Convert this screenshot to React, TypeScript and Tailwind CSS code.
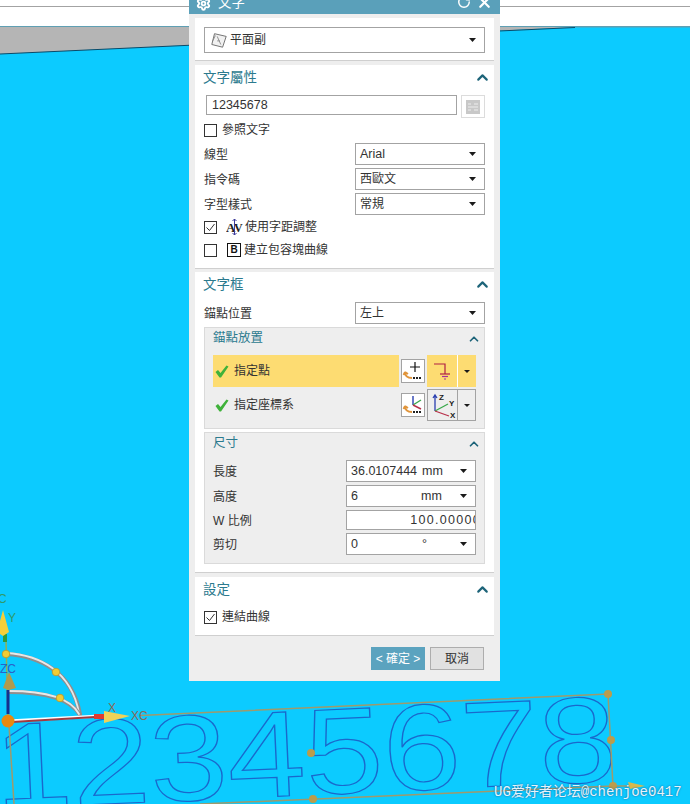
import React from 'react';
import { ChevronUp, RotateCw, Settings, X } from 'lucide-react';

const cjk = 'font-["Liberation_Sans","Noto_Sans_CJK_TC",sans-serif]';

const Caret: React.FC<{ small?: boolean }> = ({ small }) => (
  <svg width={small ? 6 : 7} height={small ? 3 : 4} viewBox="0 0 10 5" preserveAspectRatio="none" className="shrink-0">
    <path d="M0 0H10L5 5Z" fill="#1a1a1a" />
  </svg>
);

const Select: React.FC<{ className?: string; children: React.ReactNode }> = ({ className = '', children }) => (
  <div className={`flex items-center h-[22px] bg-white border border-[#a3a3a3] pl-[4px] pr-[8px] justify-between text-[12.5px] text-[#333] ${className}`}>
    {children}
    <Caret />
  </div>
);

const Check: React.FC<{ on?: boolean }> = ({ on }) => (
  <span className="flex items-center justify-center w-[13px] h-[13px] bg-white border border-[#333] shrink-0">
    {on && (
      <svg width="11" height="11" viewBox="0 0 11 11">
        <path d="M1.5 5.5L4.5 8.5L9.5 2" fill="none" stroke="#333" strokeWidth="1" />
      </svg>
    )}
  </span>
);

const PanelHeader: React.FC<{ title: string }> = ({ title }) => (
  <div className="flex items-center justify-between h-[24px] pl-[8px] pr-[3px]">
    <span className="pt-[2px] text-[13.5px] text-[#2b7a8e]">{title}</span>
    <ChevronUp size={17} strokeWidth={3} className="text-[#1d6479]" />
  </div>
);

const GroupHeader: React.FC<{ title: string }> = ({ title }) => (
  <div className="flex items-center justify-between h-[21px] pl-[8px] pr-[3px]">
    <span className="text-[12.5px] text-[#2b7a8e]">{title}</span>
    <ChevronUp size={14} strokeWidth={3} className="text-[#1d6479]" />
  </div>
);

const Tick = () => (
  <svg width="14" height="13" viewBox="0 0 14 13" className="shrink-0">
    <path d="M0.5 7L3 5L5.5 8L11.5 0.5L13.5 1.5L6 12.5H4.5Z" fill="#3fb23a" />
  </svg>
);

const Dots = () => <path d="M11 17h2v2h-2zM14 17h2v2h-2zM17 17h2v2h-2z" fill="#222" />;

const OrangeArrow = () => (
  <path d="M3 12C3 16 6 18 10 18M3 12L1.5 15M3 12L6 14" fill="none" stroke="#e0943a" strokeWidth="1.8" />
);

const PointButton = () => (
  <div className="flex items-center justify-center w-[24px] h-[24px] bg-white border border-[#a3a3a3] shrink-0">
    <svg width="22" height="22" viewBox="0 0 22 22">
      <path d="M13 2V12M8 7H18" stroke="#111" strokeWidth="1.2" />
      <OrangeArrow />
      <Dots />
    </svg>
  </div>
);

const CsysButton = () => (
  <div className="flex items-center justify-center w-[24px] h-[24px] bg-white border border-[#a3a3a3] shrink-0">
    <svg width="22" height="22" viewBox="0 0 22 22">
      <path d="M11 11V2" stroke="#2a3fb0" strokeWidth="1.4" />
      <path d="M11 11L19 6" stroke="#3aa84a" strokeWidth="1.4" />
      <path d="M11 11L19 15" stroke="#b8304a" strokeWidth="1.4" />
      <OrangeArrow />
      <Dots />
    </svg>
  </div>
);

const Row: React.FC<{ label: string; children: React.ReactNode }> = ({ label, children }) => (
  <div className="flex items-center justify-between">
    <span className="pt-[2px] text-[12px] text-[#333]">{label}</span>
    {children}
  </div>
);

// the CAD view behind the dialog
const Viewport = () => (
  <svg width="690" height="804" viewBox="0 0 690 804" className="absolute inset-0">
    <rect width="690" height="804" fill="#0ccbff" />
    <rect width="690" height="26" fill="#ffffff" />
    <rect y="6" width="690" height="1" fill="#a3a3a3" />
    <rect y="26" width="690" height="1.5" fill="#5f9fb3" />
    <path d="M0 27H575L0 54Z" fill="#b5b5b5" />
    <path d="M0 54L575 27.5" stroke="#0b4a68" strokeWidth="1" />

    <text
      transform="translate(-4 809) rotate(-2.6) scale(1 0.87)"
      fontFamily="Liberation Sans"
      fontSize="140"
      fill="none"
      stroke="#1a68cc"
      strokeWidth="1.4"
    >
      12345678
    </text>

    <g fill="none" stroke="#9f9a6c" strokeWidth="1.5">
      <path d="M140 715.5L608 694L613 786L200 804" />
      <path d="M613 786H630" />
      <path d="M9 725L14 804" />
      <path d="M6 640L8 720" stroke="#8fb05a" />
    </g>

    <g fill="none" strokeLinecap="round">
      <path d="M6 654C40 656 72 672 80 714" stroke="#8e8e8e" strokeWidth="4" />
      <path d="M6 653C40 655 71 671 79 713" stroke="#e8e8e8" strokeWidth="1.8" />
      <path d="M9 692C44 692 70 698 80 715" stroke="#8e8e8e" strokeWidth="4" />
      <path d="M9 691C44 691 70 697 79 714" stroke="#e8e8e8" strokeWidth="1.8" />
    </g>

    <path d="M8 690V714" stroke="#14308f" strokeWidth="3" />
    <path d="M9 672L16 688L9 690L3 688Z" fill="#b09a4e" />
    <path d="M3 642V634H7V642Z" fill="#2f9a3c" />
    <path d="M3 610L9 632L3 636L-3 632Z" fill="#f4cf3a" />

    <path d="M8 721L100 716" stroke="#ffffff" strokeWidth="3" />
    <path d="M12 722L95 717" stroke="#a33a3f" strokeWidth="2" />
    <rect x="94" y="714" width="11" height="5" fill="#e03a30" />
    <path d="M104 711L130 716L104 723Z" fill="#f0d258" />
    <circle cx="8" cy="721" r="6.5" fill="#e8890f" />

    <g fill="#f0cc35" stroke="#b9962a" strokeWidth="0.8">
      <circle cx="6" cy="654" r="3.8" />
      <circle cx="56" cy="672" r="3.8" />
      <circle cx="60" cy="698" r="3.8" />
    </g>
    <g fill="#bb9c4c">
      <circle cx="608" cy="694" r="4" />
      <circle cx="611" cy="740" r="4" />
      <circle cx="613" cy="786" r="4" />
      <circle cx="311" cy="753" r="4" />
      <circle cx="313" cy="799" r="4" />
    </g>
    <path d="M628 782L645 786L630 789Z" fill="#d9b94d" />

    <g fontFamily="Liberation Sans" fontSize="12">
      <text x="-2" y="603" fill="#2f9a6a">C</text>
      <text x="8" y="622" fill="#2f9a6a">Y</text>
      <text x="0" y="673" fill="#2a62c8">ZC</text>
      <text x="108" y="712" fill="#8a6a5a">X</text>
      <text x="131" y="720" fill="#8a6a5a">XC</text>
    </g>
  </svg>
);

const App: React.FC = () => {
  return (
    <div className={`relative w-[690px] h-[804px] overflow-hidden ${cjk}`}>
      <Viewport />

      <span className='absolute left-[494px] top-[783px] whitespace-nowrap text-[14px] leading-[18px] text-[#e6f4fb] font-["Liberation_Mono","Noto_Sans_CJK_SC",monospace] [text-shadow:0_0_2px_#14508a]'>
        UG爱好者论坛@chenjoe0417
      </span>

      {/* dialog */}
      <div className="absolute left-[189px] top-0 w-[311px] h-[681px] flex flex-col bg-[#eeeeee]">
        <div className="relative flex items-end justify-between h-[14px] shrink-0 overflow-hidden bg-[#5aa0ba] px-[6px] text-white">
          <div className="flex items-center gap-[7px] h-[20px] shrink-0 mb-[1px] ml-[1px]">
            <Settings size={15} strokeWidth={3} />
            <span className="text-[13.5px]">文字</span>
          </div>
          <div className="flex items-center gap-[5px] h-[20px] shrink-0 mb-[2px] mr-[1px]">
            <RotateCw size={14} strokeWidth={2.5} />
            <X size={17} strokeWidth={3} />
          </div>
        </div>

        <div className="flex flex-col mt-[4px] mx-[6px]">
          {/* type */}
          <div className="bg-white border-b border-[#cfcfcf] h-[43px] pt-[9px] px-[9px]">
            <Select className="h-[26px] pl-[5px]">
              <span className="flex items-center text-[12px]">
                <svg width="18" height="18" viewBox="0 0 20 20" className="mr-[2px]">
                  <path d="M5 3L18 6L14 18L2 15Z" fill="#f1f1f1" stroke="#666" />
                  <path d="M3 11L6 5M8 6L12 15M8 11H11" stroke="#888" fill="none" />
                </svg>
                平面副
              </span>
            </Select>
          </div>

          {/* text attributes */}
          <div className="bg-white border-b border-[#cfcfcf] h-[204px] mt-[4px]">
            <PanelHeader title="文字屬性" />
            <div className="px-[9px] mt-[6px] flex flex-col">
              <div className="flex items-start justify-between h-[23px] pl-[2px]">
                <div className="flex items-center w-[251px] h-[20px] bg-white border border-[#a3a3a3] pl-[5px] pt-[1px] text-[12.5px] text-[#333]">
                  12345678
                </div>
                <div className="flex items-center justify-center w-[24px] h-[23px] bg-white border border-[#dcdcdc]">
                  <svg width="14" height="14" viewBox="0 0 14 14">
                    <rect width="14" height="14" fill="#c8c8c8" />
                    <path d="M2 4H5M8 4H12M2 7H12M2 10H5M8 10H12" stroke="#eeeeee" />
                  </svg>
                </div>
              </div>
              <div className="flex items-center gap-[5px] h-[20px] mt-[2px] text-[12px] text-[#333]">
                <Check />
                參照文字
              </div>
              <div className="flex flex-col gap-[3px] mt-[3px]">
                <Row label="線型">
                  <Select className="w-[130px]">Arial</Select>
                </Row>
                <Row label="指令碼">
                  <Select className="w-[130px]">
                    <span className="text-[12px]">西歐文</span>
                  </Select>
                </Row>
                <Row label="字型樣式">
                  <Select className="w-[130px]">
                    <span className="text-[12px]">常規</span>
                  </Select>
                </Row>
              </div>
              <div className="flex items-center h-[20px] mt-[2px] text-[12px] text-[#333]">
                <Check on />
                <svg width="17" height="18" viewBox="0 0 17 18" className="ml-[9px] mr-[2px]">
                  <text x="0" y="14" fontFamily="Liberation Serif" fontSize="13" fontWeight="700" fill="#222">A</text>
                  <text x="8" y="14" fontFamily="Liberation Serif" fontSize="12" fontWeight="700" fill="#222">V</text>
                  <path d="M8.5 1V17M6.5 3L8.5 1L10.5 3M6.5 15L8.5 17L10.5 15" fill="none" stroke="#3c3a9a" />
                </svg>
                使用字距調整
              </div>
              <div className="flex items-center h-[20px] mt-[3px] text-[12px] text-[#333]">
                <Check />
                <span className="flex items-center justify-center w-[14px] h-[14px] ml-[10px] mr-[3px] border border-[#111] text-[10px] font-bold leading-none text-[#111]">
                  B
                </span>
                建立包容塊曲線
              </div>
            </div>
          </div>

          {/* text box */}
          <div className="bg-white border-b border-[#cfcfcf] h-[301px] mt-[3px]">
            <PanelHeader title="文字框" />
            <div className="px-[9px] mt-[6px]">
              <Row label="錨點位置">
                <Select className="w-[130px]">
                  <span className="text-[12px]">左上</span>
                </Select>
              </Row>

              <div className="h-[102px] mt-[3px] bg-[#eeeeee] border border-[#dadada]">
                <GroupHeader title="錨點放置" />
                <div className="px-[8px] mt-[6px] flex flex-col gap-[2px]">
                  <div className="flex items-center h-[32px] text-[12px] text-[#333]">
                    <div className="flex items-center gap-[5px] w-[186px] h-full pl-[2px] bg-[#fddc72]">
                      <Tick />
                      指定點
                    </div>
                    <div className="ml-[2px]">
                      <PointButton />
                    </div>
                    <div className="flex h-full ml-[2px] bg-[#fddc72]">
                      <div className="flex items-center justify-center w-[31px] border-r border-white">
                        <svg width="18" height="20" viewBox="0 0 18 20">
                          <path d="M1 3H12V13" fill="none" stroke="#b01f45" strokeWidth="1.2" />
                          <path d="M7 13H17" stroke="#b01f45" strokeWidth="1.2" />
                          <path d="M9 15.5H15" stroke="#a8309a" strokeWidth="1.2" />
                          <path d="M11 18H13" stroke="#a8309a" strokeWidth="1.2" />
                        </svg>
                      </div>
                      <div className="flex items-center justify-center w-[18px]">
                        <Caret small />
                      </div>
                    </div>
                  </div>

                  <div className="flex items-center h-[32px] text-[12px] text-[#333]">
                    <div className="flex items-center gap-[5px] w-[186px] h-full pl-[2px]">
                      <Tick />
                      指定座標系
                    </div>
                    <div className="ml-[2px]">
                      <CsysButton />
                    </div>
                    <div className="flex h-full ml-[2px] border border-[#a3a3a3]">
                      <div className="flex items-center justify-center w-[30px] border-r border-[#a3a3a3]">
                        <svg width="28" height="28" viewBox="0 0 28 28">
                          <path d="M6 20V5M4 7L6 4L8 7" fill="none" stroke="#2a3fb0" strokeWidth="1.3" />
                          <path d="M6 20L19 13" stroke="#3aa84a" strokeWidth="1.3" />
                          <path d="M6 20L20 25" stroke="#b8304a" strokeWidth="1.3" />
                          <g fontFamily="Liberation Sans" fontSize="8" fontWeight="700" fill="#222">
                            <text x="10" y="9">Z</text>
                            <text x="20" y="15">Y</text>
                            <text x="21" y="27">X</text>
                          </g>
                        </svg>
                      </div>
                      <div className="flex items-center justify-center w-[17px]">
                        <Caret small />
                      </div>
                    </div>
                  </div>
                </div>
              </div>

              <div className="h-[132px] mt-[3px] bg-[#eeeeee] border border-[#dadada]">
                <GroupHeader title="尺寸" />
                <div className="px-[8px] mt-[6px] flex flex-col gap-[3px]">
                  <Row label="長度">
                    <Select className="w-[130px]">
                      <span className="flex items-center">
                        36.0107444
                        <span className="ml-[5px]">mm</span>
                      </span>
                    </Select>
                  </Row>
                  <Row label="高度">
                    <Select className="w-[130px]">
                      <span className="flex">
                        <span className="w-[70px]">6</span>
                        <span>mm</span>
                      </span>
                    </Select>
                  </Row>
                  <Row label="W 比例">
                    <div className="flex items-center justify-end w-[130px] h-[20px] overflow-hidden bg-white border border-[#a3a3a3] text-[12.5px] tracking-[1.3px] text-[#333]">
                      <span className="-mr-[6px]">100.00000</span>
                    </div>
                  </Row>
                  <Row label="剪切">
                    <Select className="w-[130px]">
                      <span className="flex">
                        <span className="w-[71px]">0</span>
                        <span>°</span>
                      </span>
                    </Select>
                  </Row>
                </div>
              </div>
            </div>
          </div>

          {/* settings */}
          <div className="bg-white border-b border-[#cfcfcf] h-[59px] mt-[4px]">
            <PanelHeader title="設定" />
            <div className="flex items-center gap-[5px] h-[20px] mt-[6px] px-[9px] text-[12px] text-[#333]">
              <Check on />
              連結曲線
            </div>
          </div>
        </div>

        <div className="flex justify-end gap-[5px] mt-[11px] pr-[16px]">
          <button className="w-[54px] h-[23px] bg-[#5ba3bf] text-[12px] text-white">&lt; 確定 &gt;</button>
          <button className="w-[54px] h-[23px] bg-[#e1e1e1] border border-[#adadad] text-[12px] text-[#333]">取消</button>
        </div>
      </div>
    </div>
  );
};

export default App;
